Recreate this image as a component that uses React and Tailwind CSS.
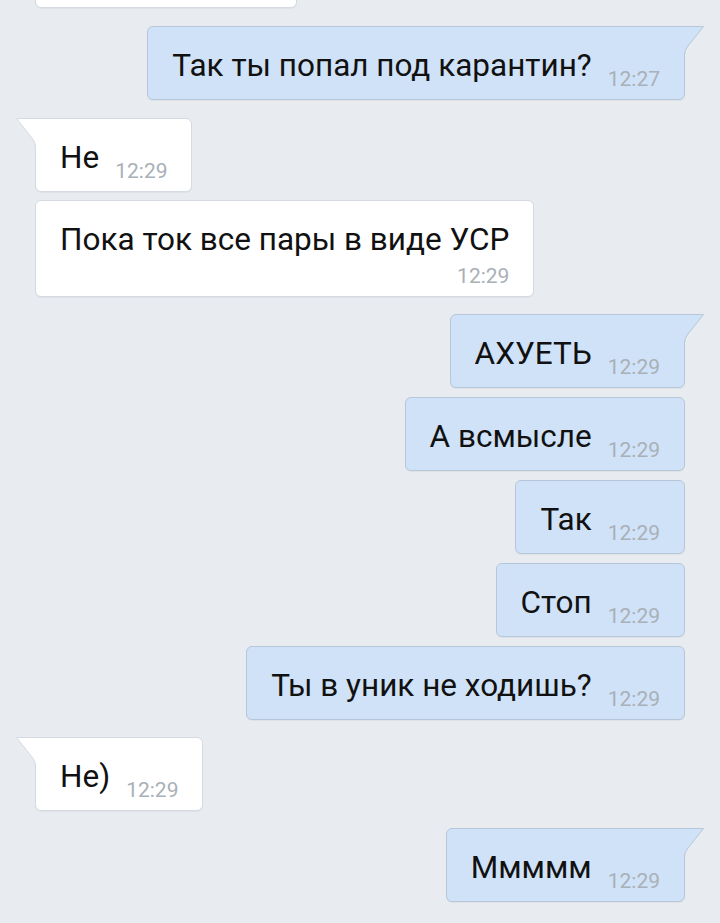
const messages = [
  { out: false, text: "", time: "", partial: true },
  { out: true, text: "Так ты попал под карантин?", time: "12:27", tail: true, gap: "mt-[18px]" },
  { out: false, text: "Не", time: "12:29", tail: true, gap: "mt-[18px]" },
  { out: false, text: "Пока ток все пары в виде УСР", time: "12:29", stacked: true, gap: "mt-[8px]" },
  { out: true, text: "АХУЕТЬ", time: "12:29", tail: true, gap: "mt-[17px]" },
  { out: true, text: "А всмысле", time: "12:29", gap: "mt-[9px]" },
  { out: true, text: "Так", time: "12:29", gap: "mt-[9px]" },
  { out: true, text: "Стоп", time: "12:29", gap: "mt-[9px]" },
  { out: true, text: "Ты в уник не ходишь?", time: "12:29", gap: "mt-[9px]" },
  { out: false, text: "Не)", time: "12:29", tail: true, gap: "mt-[17px]" },
  { out: true, text: "Ммммм", time: "12:29", tail: true, gap: "mt-[17px]" },
];

function Tail({ out }) {
  const fill = out ? "#d0e2f7" : "#ffffff";
  const stroke = out ? "#b7c6d8" : "#d5dae0";
  if (out) {
    return (
      <svg
        className="absolute top-[-1px] right-[-21px]"
        width="22"
        height="30"
        viewBox="0 0 22 30"
      >
        <path d="M0 0.5 H20.5 L5 20 Q1.5 24 1.5 29 V30 H0 Z" fill={fill} />
        <path d="M0 0.5 H20.5 L5 20 Q1.5 24 1.5 29 V30" fill="none" stroke={stroke} strokeWidth="1" />
      </svg>
    );
  }
  return (
    <svg
      className="absolute top-[-1px] left-[-21px]"
      width="22"
      height="30"
      viewBox="0 0 22 30"
    >
      <path d="M22 0.5 H1.5 L17 20 Q20.5 24 20.5 29 V30 H22 Z" fill={fill} />
      <path d="M22 0.5 H1.5 L17 20 Q20.5 24 20.5 29 V30" fill="none" stroke={stroke} strokeWidth="1" />
    </svg>
  );
}

function Bubble({ m }) {
  const color = m.out
    ? "bg-[#d0e2f7] border-[#b7c6d8]"
    : "bg-white border-[#d5dae0]";
  const corners = m.tail ? (m.out ? "rounded-[6px] rounded-tr-none" : "rounded-[6px] rounded-tl-none") : "rounded-[6px]";

  if (m.partial) {
    return (
      <div className="flex justify-start">
        <div className="mt-[-66px] h-[74px] w-[262px] rounded-[6px] border border-[#d5dae0] bg-white shadow-[0_1px_0_rgba(0,0,0,0.04)]" />
      </div>
    );
  }

  return (
    <div className={`flex ${m.out ? "justify-end" : "justify-start"} ${m.gap}`}>
      <div className={`relative border ${color} ${corners} shadow-[0_1px_0_rgba(0,0,0,0.04)] px-[24px] pt-[22px] pb-[10px]`}>
        {m.tail && <Tail out={m.out} />}
        {m.stacked ? (
          <div className="flex flex-col">
            <span className="text-[31.5px] leading-[34px] text-[#111111]">{m.text}</span>
            <span className="mt-[9px] self-end text-[21px] leading-[20px] text-[#a9b0b8]">{m.time}</span>
          </div>
        ) : (
          <div className="flex items-end gap-[16px]">
            <span className="mb-[6px] text-[31.5px] leading-[34px] text-[#111111]">{m.text}</span>
            <span className="text-[21px] leading-[20px] text-[#a9b0b8]">{m.time}</span>
          </div>
        )}
      </div>
    </div>
  );
}

export default function App() {
  return (
    <div
      className="h-[923px] w-[720px] overflow-hidden bg-[#e8ecf1] px-[35px]"
      style={{ fontFamily: "Roboto, 'Noto Sans', sans-serif" }}
    >
      {messages.map((m, i) => (
        <Bubble key={i} m={m} />
      ))}
    </div>
  );
}
